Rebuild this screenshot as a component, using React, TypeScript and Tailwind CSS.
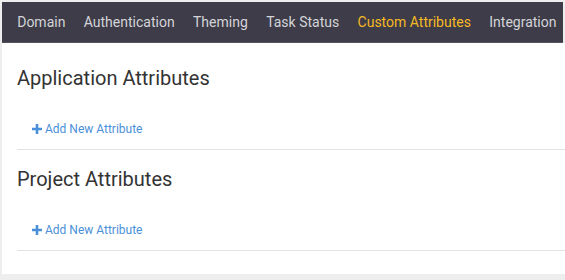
const tabs = [
  "Domain",
  "Authentication",
  "Theming",
  "Task Status",
  "Custom Attributes",
  "Integration",
];

const PlusIcon = () => (
  <svg width="10" height="10" viewBox="0 0 10 10" className="mr-[3px]">
    <path d="M3.7 0h2.6v3.7H10v2.6H6.3V10H3.7V6.3H0V3.7h3.7z" fill="#4a90d9" />
  </svg>
);

const AttributeSection = ({ title, first }: { title: string; first?: boolean }) => (
  <div className={first ? "pt-[21px]" : "pt-[15px]"}>
    <h2 className="pl-[15px] text-[20px] leading-[28px] text-[#333333]">{title}</h2>
    <div className="ml-[15px] border-b border-[#e3e3e3] pt-[28px] pb-[11px]">
      <a className="ml-[15px] flex items-center text-[12px] leading-[18px] text-[#4a90d9] cursor-pointer">
        <PlusIcon />
        Add New Attribute
      </a>
    </div>
  </div>
);

export default function App() {
  return (
    <div
      className="h-[280px] w-[565px] overflow-hidden bg-[#eeeeee] pl-[2px] pt-[2px]"
      style={{ fontFamily: "Roboto, 'Liberation Sans', sans-serif" }}
    >
      {/* Top tab bar */}
      <div className="mr-[2px] flex h-[41px] items-center border-b border-[#55545f] bg-[#3d3c48] pl-[6px]">
        {tabs.map((tab) => (
          <span
            key={tab}
            className={
              "shrink-0 whitespace-nowrap px-[9.2px] text-[14px] " +
              (tab === "Custom Attributes" ? "text-[#f6b926]" : "text-[#d4d4d8]")
            }
          >
            {tab}
          </span>
        ))}
      </div>

      {/* Content */}
      <div className="h-[231px] bg-white pb-[25px]">
        <AttributeSection title="Application Attributes" first />
        <AttributeSection title="Project Attributes" />
      </div>
    </div>
  );
}
